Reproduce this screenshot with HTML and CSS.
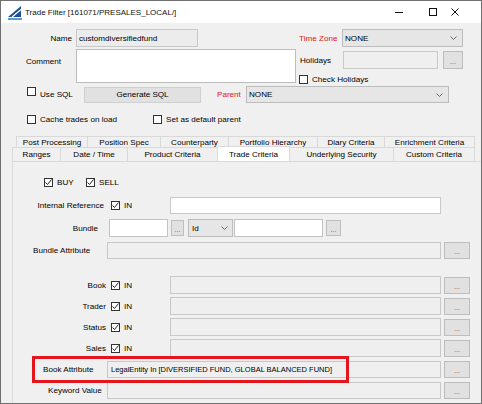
FILE: index.html
```html
<!DOCTYPE html>
<html>
<head>
<meta charset="utf-8">
<link rel="stylesheet" href="styles.css">
</head>
<body>
<div class="win">
  <div class="titlebar">
    <svg class="logo" width="16" height="14" viewBox="0 0 16 14">
      <polygon points="0,11 13,0 13,11" fill="#1d4f91"/>
      <line x1="4" y1="11" x2="13" y2="3.5" stroke="#fff" stroke-width="1.2"/>
      <polygon points="0,12 14,12 14,14 0,14" fill="#5b9bd5"/>
    </svg>
    <span class="title">Trade Filter [161071/PRESALES_LOCAL/]</span>
    <div class="controls">
      <span class="ctl"><span class="min"></span></span>
      <span class="ctl"><span class="max"></span></span>
      <span class="ctl">
        <svg width="8" height="8" viewBox="0 0 8 8"><path d="M0.5 0.5 L7.5 7.5 M7.5 0.5 L0.5 7.5" stroke="#111" stroke-width="1"/></svg>
      </span>
    </div>
  </div>

  <div class="content">
    <div class="row r1">
      <span class="lbl name-lbl">Name</span>
      <span class="field gray name-in">customdiversifiedfund</span>
      <span class="lbl red tz-lbl">Time Zone</span>
      <span class="field select tz-sel">NONE<svg class="chev" width="7" height="4" viewBox="0 0 7 4"><polyline points="0.5,0.5 3.5,3.5 6.5,0.5" fill="none" stroke="#666"/></svg></span>
    </div>

    <div class="row r2">
      <span class="lbl comment-lbl">Comment</span>
      <span class="field white comment-in"></span>
      <div class="rcol">
        <div class="row hol-row">
          <span class="lbl hol-lbl">Holidays</span>
          <span class="field gray hol-in"></span>
          <span class="btn dots hol-btn">...</span>
        </div>
        <div class="row chk-row">
          <span class="cb"></span>
          <span class="cblbl">Check Holidays</span>
        </div>
      </div>
    </div>

    <div class="row r3">
      <span class="cb usesql-cb"></span>
      <span class="cblbl usesql-lbl">Use SQL</span>
      <span class="btn gen-btn">Generate SQL</span>
      <span class="lbl red parent-lbl">Parent</span>
      <span class="field select parent-sel">NONE<svg class="chev" width="7" height="4" viewBox="0 0 7 4"><polyline points="0.5,0.5 3.5,3.5 6.5,0.5" fill="none" stroke="#666"/></svg></span>
    </div>

    <div class="row r4">
      <span class="cb cache-cb"></span>
      <span class="cblbl cache-lbl">Cache trades on load</span>
      <span class="cb"></span>
      <span class="cblbl">Set as default parent</span>
    </div>

    <div class="tabs">
      <div class="tabrow tr1">
        <span class="tab w-pp">Post Processing</span>
        <span class="tab w-ps">Position Spec</span>
        <span class="tab w-cp">Counterparty</span>
        <span class="tab w-ph">Portfolio Hierarchy</span>
        <span class="tab w-dc">Diary Criteria</span>
        <span class="tab w-ec">Enrichment Criteria</span>
      </div>
      <div class="tabrow tr2">
        <span class="tab w-rg">Ranges</span>
        <span class="tab w-dt">Date / Time</span>
        <span class="tab w-pc">Product Criteria</span>
        <span class="tab sel w-tc">Trade Criteria</span>
        <span class="tab w-us">Underlying Security</span>
        <span class="tab w-cc">Custom Criteria</span>
      </div>
    </div>

    <div class="panel">
      <div class="row buy-row">
        <span class="cb checked"><svg width="9" height="9" viewBox="0 0 9 9"><path d="M1.5 4.5 L3.5 6.5 L7.5 1.5" fill="none" stroke="#222" stroke-width="1"/></svg></span>
        <span class="cblbl buy-lbl">BUY</span>
        <span class="cb checked"><svg width="9" height="9" viewBox="0 0 9 9"><path d="M1.5 4.5 L3.5 6.5 L7.5 1.5" fill="none" stroke="#222" stroke-width="1"/></svg></span>
        <span class="cblbl">SELL</span>
      </div>

      <div class="row prow ir-row">
        <span class="plbl ir-lbl">Internal Reference</span>
        <span class="ingrp"><span class="cb checked"><svg width="9" height="9" viewBox="0 0 9 9"><path d="M1.5 4.5 L3.5 6.5 L7.5 1.5" fill="none" stroke="#222" stroke-width="1"/></svg></span><span class="inlbl">IN</span></span>
        <span class="field white long"></span>
      </div>

      <div class="row prow bundle-row">
        <span class="plbl bundle-lbl">Bundle</span>
        <span class="field white b-in1"></span>
        <span class="btn dots b-btn1">...</span>
        <span class="field select b-sel">Id<svg class="chev" width="7" height="4" viewBox="0 0 7 4"><polyline points="0.5,0.5 3.5,3.5 6.5,0.5" fill="none" stroke="#666"/></svg></span>
        <span class="field white b-in2"></span>
        <span class="btn dots b-btn2">...</span>
      </div>

      <div class="row prow ba-row">
        <span class="plbl left ba-lbl">Bundle Attribute</span>
        <span class="field gray wide"></span>
        <span class="btn dots pbtn">...</span>
      </div>

      <div class="row prow book-row">
        <span class="plbl">Book</span>
        <span class="ingrp"><span class="cb checked"><svg width="9" height="9" viewBox="0 0 9 9"><path d="M1.5 4.5 L3.5 6.5 L7.5 1.5" fill="none" stroke="#222" stroke-width="1"/></svg></span><span class="inlbl">IN</span></span>
        <span class="field gray long"></span>
        <span class="btn dots pbtn">...</span>
      </div>

      <div class="row prow next-row">
        <span class="plbl">Trader</span>
        <span class="ingrp"><span class="cb checked"><svg width="9" height="9" viewBox="0 0 9 9"><path d="M1.5 4.5 L3.5 6.5 L7.5 1.5" fill="none" stroke="#222" stroke-width="1"/></svg></span><span class="inlbl">IN</span></span>
        <span class="field gray long"></span>
        <span class="btn dots pbtn">...</span>
      </div>

      <div class="row prow next-row">
        <span class="plbl">Status</span>
        <span class="ingrp"><span class="cb checked"><svg width="9" height="9" viewBox="0 0 9 9"><path d="M1.5 4.5 L3.5 6.5 L7.5 1.5" fill="none" stroke="#222" stroke-width="1"/></svg></span><span class="inlbl">IN</span></span>
        <span class="field gray long"></span>
        <span class="btn dots pbtn">...</span>
      </div>

      <div class="row prow next-row">
        <span class="plbl">Sales</span>
        <span class="ingrp"><span class="cb checked"><svg width="9" height="9" viewBox="0 0 9 9"><path d="M1.5 4.5 L3.5 6.5 L7.5 1.5" fill="none" stroke="#222" stroke-width="1"/></svg></span><span class="inlbl">IN</span></span>
        <span class="field gray long"></span>
        <span class="btn dots pbtn">...</span>
      </div>

      <div class="row prow attr-row">
        <span class="plbl left bka-lbl">Book Attribute</span>
        <span class="field gray wide attr-val">LegalEntity In [DIVERSIFIED FUND, GLOBAL BALANCED FUND]</span>
        <span class="btn dots pbtn">...</span>
      </div>

      <div class="row prow kw-row">
        <span class="plbl left kw-lbl">Keyword Value</span>
        <span class="field gray wide"></span>
        <span class="btn dots pbtn">...</span>
      </div>

      <div class="highlight"></div>
    </div>
  </div>
</div>
</body>
</html>
```

FILE: styles.css
```css
html, body {
  margin: 0;
  padding: 0;
  background: #f0f0f0;
}
body {
  font-family: "Liberation Sans", Arial, sans-serif;
  font-size: 8.1px;
  color: #000;
}
.win {
  width: 482px;
  height: 404px;
  box-sizing: border-box;
  border: 1px solid #707070;
  background: #f0f0f0;
  overflow: hidden;
}
.titlebar {
  height: 22px;
  background: #fff;
  display: flex;
  align-items: center;
}
.logo {
  margin-left: 7px;
  margin-top: 1px;
}
.title {
  margin-left: 1px;
  font-size: 8px;
  color: #111;
}
.controls {
  margin-left: auto;
  display: flex;
  height: 22px;
}
.ctl {
  width: 34px;
  display: flex;
  align-items: center;
  justify-content: center;
}
.ctl:last-child { width: 30px; justify-content: flex-start; padding-left: 1px; }
.min { width: 8px; height: 1px; background: #111; }
.max { width: 6px; height: 6px; border: 1px solid #111; }

.content { display: flex; flex-direction: column; }
.row { display: flex; align-items: center; }

.field {
  box-sizing: border-box;
  border: 1px solid #c3c3c3;
  display: flex;
  align-items: center;
  padding-left: 2px;
  white-space: nowrap;
  overflow: hidden;
}
.white { background: #fff; }
.gray { background: #efefef; border-color: #c8c8c8; }
.select { background: #e6e6e6; border-color: #bcbcbc; position: relative; }
.chev { margin-left: auto; margin-right: 5px; }
.btn {
  box-sizing: border-box;
  background: #e1e1e1;
  border: 1px solid #bdbdbd;
  display: flex;
  align-items: center;
  justify-content: center;
}
.dots { color: #555; font-size: 7px; padding-top: 2px; }
.red { color: #e4131b; }

.cb {
  box-sizing: border-box;
  width: 9px;
  height: 9px;
  border: 1px solid #333;
  background: #fff;
  flex: none;
  display: flex;
  align-items: center;
  justify-content: center;
}
.cb svg { margin: -1px; }
.cblbl { margin-left: 4px; }

/* top section */
.r1 { margin-top: 6px; height: 18px; }
.name-lbl { width: 71px; text-align: right; padding-right: 1px; }
.name-in { margin-left: 3px; width: 122px; height: 18px; background: #ececec; }
.tz-lbl { margin-left: 101px; width: 43px; }
.tz-sel { width: 121px; height: 18px; }

.r2 { margin-top: 2px; align-items: flex-start; height: 36px; }
.comment-lbl { width: 50px; padding-left: 25px; padding-top: 8px; }
.comment-in { width: 220px; height: 34px; border-color: #bdbdbd; }
.rcol { margin-left: 3px; display: flex; flex-direction: column; }
.hol-row { margin-top: 2px; height: 18px; }
.hol-lbl { width: 43px; padding-left: 1px; }
.hol-in { width: 95px; height: 18px; }
.hol-btn { margin-left: 5px; width: 20px; height: 18px; }
.chk-row { margin-top: 6px; height: 9px; }

.r3 { margin-top: 1px; height: 17px; }
.usesql-cb { margin-left: 26px; margin-top: -6px; }
.usesql-lbl { width: 44px; }
.gen-btn { width: 117px; height: 16px; background: #e1e1e1; border-color: #cfcfcf; }
.parent-lbl { margin-left: 16px; width: 29px; }
.parent-sel { width: 203px; height: 17px; }

.r4 { margin-top: 12px; height: 9px; }
.cache-cb { margin-left: 26px; }
.cache-lbl { width: 113px; }

/* tabs */
.tabs { margin-top: 12px; margin-left: 11px; display: flex; flex-direction: column; }
.tabrow { display: flex; }
.tr1 { height: 11px; padding-left: 4px; }
.tr2 { height: 14px; }
.tab {
  box-sizing: border-box;
  border: 1px solid #d9d9d9;
  border-bottom: none;
  border-left: none;
  display: flex;
  align-items: center;
  justify-content: center;
  background: #f0f0f0;
  white-space: nowrap;
}
.tr1 .tab { padding-top: 1px; }
.tab:first-child { border-left: 1px solid #d9d9d9; }
.tab.sel { background: #fff; margin-top: -1px; height: 15px; position: relative; z-index: 1; border-color: #d9d9d9; }
.w-pp { width: 72px; }
.w-ps { width: 73px; }
.w-cp { width: 68px; }
.w-ph { width: 89px; }
.w-dc { width: 67px; }
.w-ec { width: 90px; }
.w-rg { width: 49px; }
.w-dt { width: 67px; }
.w-pc { width: 90px; }
.w-tc { width: 72px; }
.w-us { width: 104px; }
.w-cc { width: 81px; }

/* panel */
.panel {
  margin-left: 11px;
  width: 470px;
  height: 260px;
  box-sizing: border-box;
  border: 1px solid #d9d9d9;
  border-right: none;
  position: relative;
  display: flex;
  flex-direction: column;
}
.buy-row { margin-top: 16px; height: 9px; padding-left: 31px; }
.buy-lbl { width: 29px; }

.prow { margin-top: 3px; }
.plbl { width: 93px; text-align: right; flex: none; }
.plbl.left { text-align: left; width: 94px; box-sizing: border-box; }
.ingrp { width: 64px; padding-left: 5px; box-sizing: border-box; display: flex; align-items: center; flex: none; }
.inlbl { margin-left: 4px; }
.long { width: 271px; height: 18px; }
.wide { width: 334px; height: 17px; }
.pbtn { margin-left: 3px; width: 26px; height: 17px; }

.ir-row { margin-top: 10px; }
.ir-lbl { padding-right: 2px; width: 91px; }
.ir-row .long { height: 17px; border-color: #c9c9c9; }

.bundle-row { margin-top: 5px; }
.bundle-lbl { width: 85px; }
.b-in1 { margin-left: 11px; width: 59px; height: 18px; }
.b-btn1 { margin-left: 3px; width: 13px; height: 16px; }
.b-sel { margin-left: 4px; width: 45px; height: 18px; padding-left: 3px; }
.b-sel .chev { margin-right: 4px; }
.b-in2 { margin-left: 1px; width: 89px; height: 18px; }
.b-btn2 { margin-left: 3px; width: 15px; height: 16px; }

.ba-row { margin-top: 5px; }
.ba-lbl { padding-left: 20px; }

.book-row { margin-top: 17px; }
.next-row .long, .book-row .long { height: 18px; }

.attr-row { margin-top: 4px; }
.attr-val { padding-left: 3px; font-size: 7.5px; }
.bka-lbl { padding-left: 30px; }
.kw-row { margin-top: 4px; }
.kw-lbl { padding-left: 35px; }

.highlight {
  position: absolute;
  left: 19px;
  top: 194px;
  width: 317px;
  height: 27px;
  box-sizing: border-box;
  border: 3px solid #e3161e;
}
```
